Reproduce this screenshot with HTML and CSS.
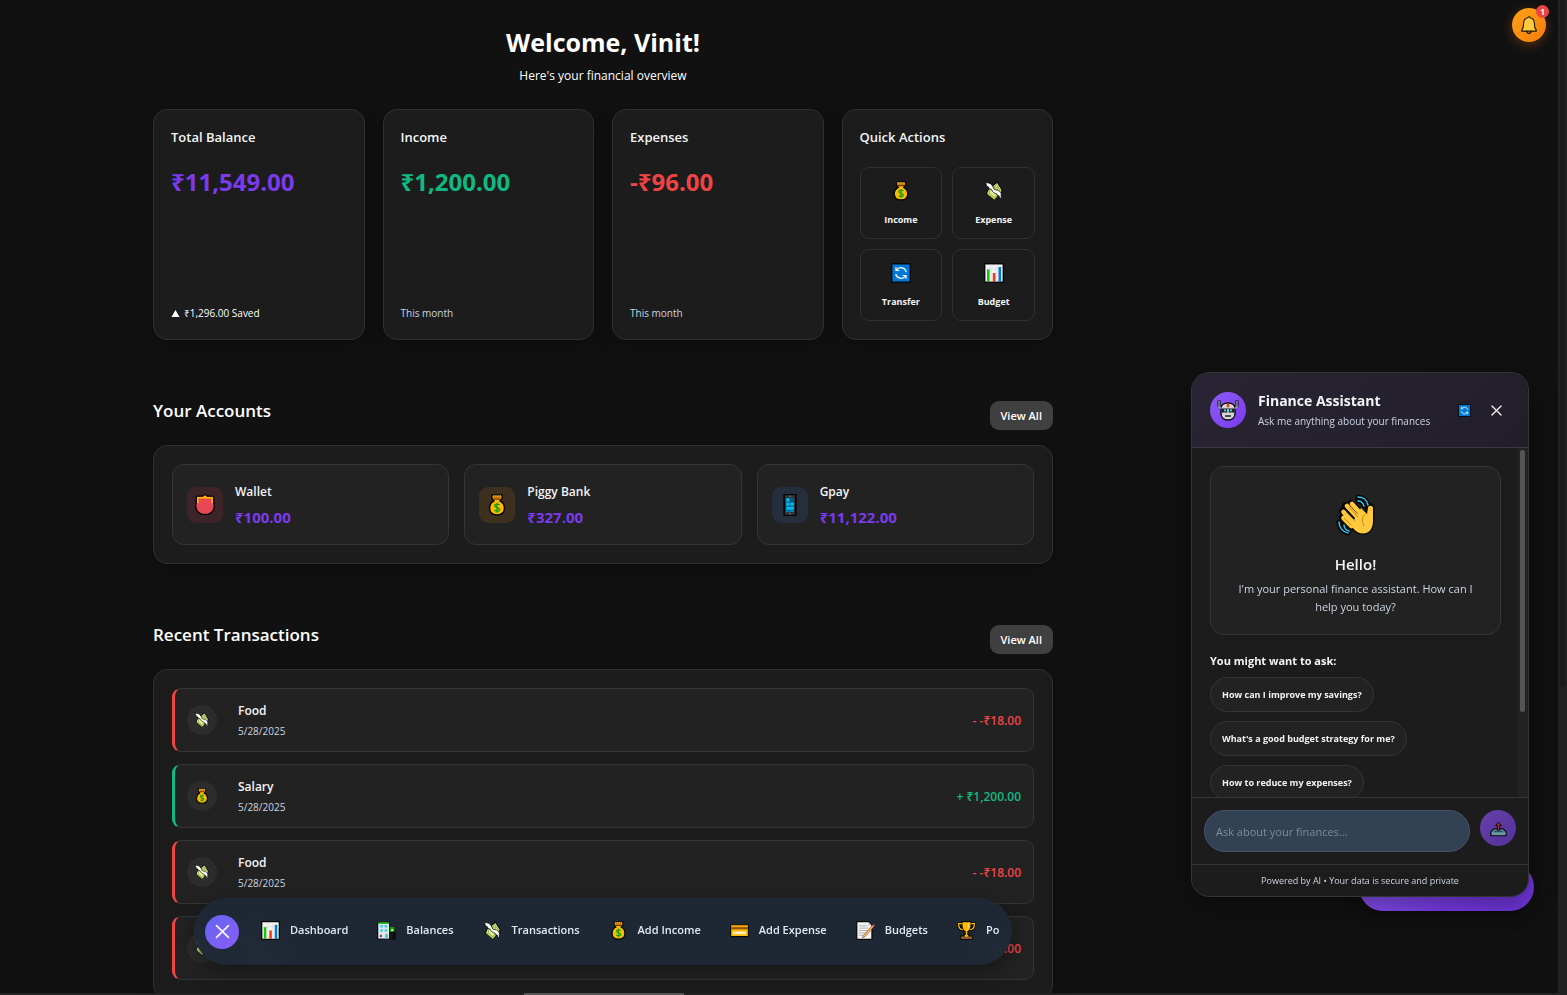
FILE: index.html
```
<!DOCTYPE html>
<html lang="en">
<head>
<meta charset="utf-8">
<meta name="viewport" content="width=device-width, initial-scale=1">
<title>Finance Dashboard</title>
<link rel="stylesheet" href="styles.css">
</head>
<body>
<svg class="sprite" aria-hidden="true">
  <symbol id="bag" viewBox="0 0 20 20">
    <path d="M5.500 1h9v3l-1.700 2.300c2.700 1.500 4 3.700 4 6.500 0 4-2.800 6.200-6.800 6.200s-6.800-2.200-6.800-6.200c0-2.800 1.300-5 4-6.500L5.500 4z" fill="#ffb900" stroke="#080808" stroke-width="1.400"/>
    <path d="M6 1.700h8v2.300H6z" fill="#d67900"/><path d="M7 4h6v1.300H7z" fill="#6d4108"/><path d="M7 1v1.500M9 1v1.500M11 1v1.500M13 1v1.500" stroke="#f7d47a" stroke-width=".7"/>
    <path d="M12.300 10c-.6-1-4.400-1.300-4.400.7 0 2 4.500 1.300 4.500 3.400 0 1.900-3.800 1.900-4.700.6M10 8v9" fill="none" stroke="#13a10e" stroke-width="1.300"/>
  </symbol>
  <symbol id="cash" viewBox="0 0 20 20">
    <path d="m4 8 9-7.500 5.800 8.800L10.500 19.500 2 12.500z" fill="#080808"/>
    <path d="m5 8.500 8-6.500 4.500 7.300-7.200 8.700L3.300 12z" fill="#e3f29a"/>
    <path d="m6 9 6.500-5.500 3.700 6-6 7-5-4.500z" fill="none" stroke="#6f9426" stroke-width=".8"/>
    <circle cx="11.500" cy="8" r="2" fill="#cfe46d" stroke="#658922" stroke-width=".7"/>
    <path d="m3.500 12.500 6.800 5.500 6.700-8" stroke="#b3d13e" stroke-width="1.200" fill="none"/>
    <path d="M1.500 1.700c3.700-.2 6.200 1 7.300 3.800l1.700 3.200c4 .2 6.700 2 6.700 4.500v4.600l-1.700-1-.5-2-1.500-.3-.7-1.600c-2.300-.4-4.500-2-5.300-4.400L5.300 7.800 4.500 6l-1.700-.7z" fill="#fff" stroke="#080808" stroke-width=".8"/>
  </symbol>
  <symbol id="sync" viewBox="0 0 20 20">
    <path d="M.7.7h18.600v18.600H.7z" fill="#0078d4" stroke="#080808" stroke-width="1.400"/>
    <path d="M15.300 9A5.500 5.500 0 0 0 5.500 7M4.700 11A5.500 5.500 0 0 0 14.500 13M5 4.200V7.500h3.300M15 15.800v-3.300h-3.300" fill="none" stroke="#fff" stroke-width="1.200"/>
  </symbol>
  <symbol id="chart" viewBox="0 0 20 20">
    <path d="M.7.7h18.600v18.600H.7z" fill="#f2f2f2" stroke="#080808" stroke-width="1.400"/>
    <path d="M7 1.500v17M12.500 1.500v17M1.500 6h17" stroke="#ddd" stroke-width=".7"/>
    <path d="M3 6.500h2.600v12.200H3z" fill="#16c60c"/><path d="M8.800 10h2.600v8.700H8.800z" fill="#f03a17"/><path d="M14.500 4h2.600v14.700h-2.600z" fill="#0078d7"/>
  </symbol>
  <symbol id="purse" viewBox="0 0 20 20">
    <path d="M10 .8c1.600 0 1.700.8 2.200 1.100h4.200c1 0 1.600.6 1.600 1.600v4.200c1.800 5.700-1.600 10.900-8 10.900S.2 13.400 2 7.700V3.500c0-1 .6-1.600 1.600-1.600h4.200C8.300 1.600 8.400.8 10 .8z" fill="#e74856" stroke="#080808" stroke-width="1.300"/>
    <path d="M3.500 8.500V3.400h13v5.100M9 2.400h2" fill="none" stroke="#ffb900" stroke-width="1.400"/>
  </symbol>
  <symbol id="phone" viewBox="0 0 20 20">
    <path d="M4.700.5h10.600v19H4.700z" fill="#353535" stroke="#050505" stroke-width="1.400"/><path d="M6.300 3.500h7.400v13H6.300z" fill="#00577e"/>
    <path d="M6.600 3.800h2.900v3H6.600zM6.600 7.700h2.900v3H6.600zM10.400 7.700h3v3h-3zM6.600 11.600h6.800v2.800H6.600z" fill="#00bcf2"/><path d="M6.600 15.600h2M10 15.600h3.400" stroke="#00bcf2" stroke-width=".8"/><path d="M9 2h2M9 18h2" stroke="#999" stroke-width=".6"/>
  </symbol>
  <symbol id="building" viewBox="0 0 20 20">
    <path d="M.3.8h13.400v5.400h6v13.300H.3z" fill="#080808"/><path d="M1.300 2.500h11.400v16H1.300z" fill="#e6e6e6"/><path d="M1.300 1.300h11.400v1.600H1.300zM13.500 6.700h5V8h-5z" fill="#16c60c"/>
    <path d="M13.500 7.500h5v4h-5z" fill="#13a10e"/><path d="M15 8.500h2v2h-2z" fill="#c5f7bd"/>
    <path d="M3.500 4.300h2.600v2.600H3.500zM8 4.300h2.600v2.600H8zM3.500 8.700h2.600v2.600H3.500zM8 8.700h2.600v2.600H8z" fill="#38c9ef"/><path d="M8.500 13.500h3v5h-3z" fill="#4fc6df"/><path d="M3 14.500h2.300v2.500H3z" fill="#5a558b"/><path d="M13.500 12.500h4v6h-4z" fill="#171717"/>
  </symbol>
  <symbol id="card" viewBox="0 0 20 20">
    <rect x=".6" y="4" width="18.800" height="12.500" rx="1" fill="#ffb900" stroke="#080808" stroke-width="1.200"/><path d="M1.200 6.500h17.600v2.300H1.200z" fill="#8e4f08"/><path d="M1.200 4.700h17.600v1H1.200z" fill="#e58b18"/><path d="M3 11h14v3H3z" fill="#ffe09a"/><path d="M3.500 13 9 12l8 1" stroke="#fff" fill="none"/>
  </symbol>
  <symbol id="memo" viewBox="0 0 20 20">
    <path d="M.8.7h12.500l3.500 3.500v15.100H.8z" fill="#f4f4f4" stroke="#080808" stroke-width="1.300"/><path d="M13 1v3.500h3.500" fill="#bbb"/>
    <path d="M3 5h9M3 7.500h10M3 10h10M3 12.500h8M3 15h6" stroke="#a9a9a9" stroke-width=".9"/><path d="m7.500 15.500 10-11.300 1.600 1.300L9.200 16.800l-2.500.9z" fill="#ffb45c" stroke="#5b3618" stroke-width=".5"/><path d="m17 4.800 1.200-1.500 1.700 1.400-1.300 1.500z" fill="#e74856"/>
  </symbol>
  <symbol id="trophy" viewBox="0 0 20 20">
    <path d="M5 2.800H1.700c0 4.500 2 6.700 5.300 6.700M15 2.800h3.300c0 4.500-2 6.700-5.300 6.700" fill="none" stroke="#080808" stroke-width="3.200"/>
    <path d="M5 .7h10c.3 6-.7 9-3.500 10.500V14h1v1.800H16v3.500H4v-3.500h3.500V14h1v-2.800C5.700 9.700 4.700 6.700 5 .7z" fill="#ffb900" stroke="#080808" stroke-width="1.300"/>
    <path d="M5 2.800H1.700c0 4.500 2 6.200 4.500 6.200M15 2.800h3.300c0 4.500-2 6.200-4.500 6.200" fill="none" stroke="#ffb900" stroke-width="1.300"/><path d="M12 2c.5 5-.5 7-2 8" fill="none" stroke="#ffda6b"/><path d="M4.700 16.500h10.600v2.300H4.700z" fill="#8e562e"/>
  </symbol>
  <symbol id="bell" viewBox="0 0 20 20">
    <circle cx="10" cy="17" r="2.200" fill="#ffc83d" stroke="#17130a" stroke-width="1.400"/><path d="M8.700 2c0-1.600 2.600-1.600 2.600 0 3.500.6 4.700 3 4.700 6.500 0 3.500.5 5.200 2 7v1.300H2v-1.300c1.500-1.800 2-3.500 2-7C4 5 5.200 2.600 8.700 2z" fill="#ffc83d" stroke="#17130a" stroke-width="1.200"/>
  </symbol>
  <symbol id="robot" viewBox="0 0 22 22">
    <path d="M2 1.500v6M20 1.500v6" stroke="#080808" stroke-width="3"/>
    <path d="M4 9c0-3 3-5 7-5s7 2 7 5v5.500c0 4-3 6.500-7 6.500s-7-2.500-7-6.500z" fill="#d3d5d6" stroke="#080808" stroke-width="1.400"/>
    <path d="M2 2v5.500l2.500 2.300M20 2v5.500l-2.500 2.300" fill="none" stroke="#9a9d9f" stroke-width="1.400"/>
    <path d="M9.800 4.500h2.400v3.700H9.800z" fill="#f03a17"/><path d="M4.700 9.500h12.600v4H4.700z" fill="#161616"/><path d="M6.800 10.300h2.400v2.200H6.800zM12.800 10.300h2.400v2.200h-2.400z" fill="#31c4ed"/><path d="M10 10h2v4h-2z" fill="#aeb1b2"/><path d="M8 16.300h6v1.500H8z" fill="#222"/>
  </symbol>
  <symbol id="wave" viewBox="0 0 40 42">
    <g fill="none" stroke-linecap="round" stroke-linejoin="round">
      <g stroke="#080808">
        <path d="M22 7c3 0 5 2 6 5M22 3c5 0 9 3 10 8M8 31c0 3 2 5 5 6M3 28c0 6 4 10 9 11" stroke-width="5"/>
        <path d="m15 10 9 9M10 12l12 13M7 17l11 12M7 23l9 9" stroke-width="8"/>
        <path d="M16 32c7 9 20 9 20-5V14c0-3-4-3-4 0l-1 6L17 14l-6 12z" stroke-width="5"/>
      </g>
      <path d="M22 7c3 0 5 2 6 5M22 3c5 0 9 3 10 8M8 31c0 3 2 5 5 6M3 28c0 6 4 10 9 11" stroke="#31c4ed" stroke-width="1.500"/>
      <path d="m16 10 9 10M11 12l12 13M7.500 18l11 12M7.500 24l8 8" stroke="#ffc83d" stroke-width="4.600"/>
    </g>
    <path d="m15 31 10-17 6 6 1-6c0-3 5-3 5 0v13c0 15-14 16-21 6z" fill="#ffc83d"/>
    <path d="m13 13 9 10M10 18l9 9M8 24l7 7M32 19c-6 2-7 7-4 13" fill="none" stroke="#c58a16" stroke-width="1"/>
  </symbol>
  <symbol id="outbox" viewBox="0 0 20 20">
    <path d="M4.500 10.500h11l3.500 3.500v4.500H1V14z" fill="#6f98a5" stroke="#080808" stroke-width="1.400"/><path d="M5 12.500h10l1.500 1.800h-13z" fill="#22566b"/><path d="m10 2.500 3.500 4h-2V12h-3V6.500h-2z" fill="#a12a35" stroke="#080808" stroke-width="1.100"/>
  </symbol>
  <symbol id="close" viewBox="0 0 20 20"><path d="m3 3 14 14M17 3 3 17" fill="none" stroke="currentColor" stroke-width="2" stroke-linecap="round"/></symbol>
</svg>

<div class="layout">
<main class="dashboard">
  <header class="welcome">
    <h1>Welcome, Vinit!</h1>
    <p>Here's your financial overview</p>
  </header>

  <section class="summary" aria-label="Summary">
    <article class="panel stat">
      <h2>Total Balance</h2>
      <p class="amount violet">₹11,549.00</p>
      <p class="note saved"><svg class="triangle" viewBox="0 0 10 10" aria-hidden="true"><path d="m5 1 4.500 8h-9z" fill="#fff"/></svg>₹1,296.00 Saved</p>
    </article>
    <article class="panel stat">
      <h2>Income</h2>
      <p class="amount green">₹1,200.00</p>
      <p class="note">This month</p>
    </article>
    <article class="panel stat">
      <h2>Expenses</h2>
      <p class="amount red">-₹96.00</p>
      <p class="note">This month</p>
    </article>
    <article class="panel stat">
      <h2>Quick Actions</h2>
      <div class="actions">
        <button class="action" type="button"><svg><use href="#bag"/></svg>Income</button>
        <button class="action" type="button"><svg><use href="#cash"/></svg>Expense</button>
        <button class="action" type="button"><svg><use href="#sync"/></svg>Transfer</button>
        <button class="action" type="button"><svg><use href="#chart"/></svg>Budget</button>
      </div>
    </article>
  </section>

  <section class="section">
    <div class="section-head"><h2>Your Accounts</h2><button class="view-all" type="button">View All</button></div>
    <div class="panel accounts">
      <article class="account"><span class="account-icon tint-red"><svg><use href="#purse"/></svg></span><div><h3>Wallet</h3><p>₹100.00</p></div></article>
      <article class="account"><span class="account-icon tint-amber"><svg><use href="#bag"/></svg></span><div><h3>Piggy Bank</h3><p>₹327.00</p></div></article>
      <article class="account"><span class="account-icon tint-blue"><svg><use href="#phone"/></svg></span><div><h3>Gpay</h3><p>₹11,122.00</p></div></article>
    </div>
  </section>

  <section class="section">
    <div class="section-head"><h2>Recent Transactions</h2><button class="view-all" type="button">View All</button></div>
    <ul class="panel transactions">
      <li class="transaction expense"><span class="round-icon"><svg><use href="#cash"/></svg></span><div><h3>Food</h3><time datetime="2025-05-28">5/28/2025</time></div><strong>- -₹18.00</strong></li>
      <li class="transaction income"><span class="round-icon"><svg><use href="#bag"/></svg></span><div><h3>Salary</h3><time datetime="2025-05-28">5/28/2025</time></div><strong>+ ₹1,200.00</strong></li>
      <li class="transaction expense"><span class="round-icon"><svg><use href="#cash"/></svg></span><div><h3>Food</h3><time datetime="2025-05-28">5/28/2025</time></div><strong>- -₹18.00</strong></li>
      <li class="transaction expense"><span class="round-icon"><svg><use href="#cash"/></svg></span><div><h3>Food</h3><time datetime="2025-05-28">5/28/2025</time></div><strong>- -₹18.00</strong></li>
    </ul>
  </section>
</main>
</div>

<nav class="dock" aria-label="Main">
  <button class="dock-close" type="button" aria-label="Close menu"><svg><use href="#close"/></svg></button>
  <div class="dock-links">
    <a href="#"><svg><use href="#chart"/></svg>Dashboard</a>
    <a href="#"><svg><use href="#building"/></svg>Balances</a>
    <a href="#"><svg><use href="#cash"/></svg>Transactions</a>
    <a href="#"><svg><use href="#bag"/></svg>Add Income</a>
    <a href="#"><svg><use href="#card"/></svg>Add Expense</a>
    <a href="#"><svg><use href="#memo"/></svg>Budgets</a>
    <a href="#"><svg><use href="#trophy"/></svg>Pots</a>
  </div>
</nav>

<button class="bell" type="button" aria-label="Notifications"><svg><use href="#bell"/></svg><span class="badge">1</span></button>
<button class="assistant-toggle" type="button" aria-label="Toggle assistant"></button>

<aside class="chat" aria-label="Finance Assistant">
  <header class="chat-head">
    <span class="avatar"><svg><use href="#robot"/></svg></span>
    <div class="chat-title"><h2>Finance Assistant</h2><p>Ask me anything about your finances</p></div>
    <button type="button" class="icon-button" aria-label="Reset chat"><svg><use href="#sync"/></svg></button>
    <button type="button" class="icon-button" aria-label="Close chat"><svg><use href="#close"/></svg></button>
  </header>
  <div class="chat-main">
    <div class="chat-body">
      <div class="hello"><svg><use href="#wave"/></svg><h3>Hello!</h3><p>I'm your personal finance assistant. How can I help you today?</p></div>
      <h4>You might want to ask:</h4>
      <div class="chips">
        <button type="button">How can I improve my savings?</button>
        <button type="button">What's a good budget strategy for me?</button>
        <button type="button">How to reduce my expenses?</button>
      </div>
    </div>
    <div class="chat-track"><div class="chat-thumb"></div></div>
  </div>
  <form class="chat-form">
    <input type="text" aria-label="Ask about your finances" placeholder="Ask about your finances...">
    <button type="button" aria-label="Send"><svg><use href="#outbox"/></svg></button>
  </form>
  <footer class="chat-foot">Powered by AI • Your data is secure and private</footer>
</aside>
<div class="page-track"><div class="page-thumb"></div></div>
<div class="bottom-track"><div class="bottom-thumb"></div></div>
</body>
</html>
```
FILE: styles.css
```
* { box-sizing: border-box; }
body {
  margin: 0;
  height: 100vh;
  overflow: hidden;
  background: #111;
  color: #f3f4f6;
  font-family: "Open Sans", "Noto Sans", sans-serif;
  font-size: 12px;
}
h1, h2, h3, h4, p, ul { margin: 0; padding: 0; }
button, input { font: inherit; color: inherit; }
button { cursor: pointer; padding: 0; border: 0; }
svg { display: block; flex: none; }
.sprite { position: absolute; width: 0; height: 0; }

.layout { padding-right: 361px; }
.dashboard { max-width: 936px; margin: 0 auto; padding: 24px 18px; }
.welcome { text-align: center; color: #fff; }
.welcome h1 { font-size: 25px; line-height: 36px; font-weight: 700; }
.welcome p { margin-top: 6px; font-size: 12px; line-height: 19px; }

.panel {
  background: #1c1c1c;
  border: 1px solid #303030;
  border-radius: 14px;
  box-shadow: 0 4px 18px rgba(0, 0, 0, .25);
}
.summary { display: grid; grid-template-columns: repeat(4, 1fr); gap: 18px; margin-top: 24px; }
.stat { display: flex; flex-direction: column; padding: 18px 17px; }
.stat h2 { font-size: 13px; line-height: 18px; font-weight: 600; }
.amount { margin-top: 18px; font-size: 24px; line-height: 36px; font-weight: 700; }
.violet { color: #7c3aed; }
.green { color: #10b981; }
.red { color: #ef4444; }
.note { display: flex; align-items: center; gap: 4px; margin-top: auto; font-size: 10px; line-height: 16px; color: #cbd5e1; }
.saved { color: #fff; }
.triangle { width: 9px; height: 9px; }
.actions { display: grid; grid-template-columns: 1fr 1fr; gap: 10px; margin-top: 21px; }
.action {
  display: flex; flex-direction: column; align-items: center; justify-content: center; gap: 12px;
  height: 72px; padding-top: 1px; border: 1px solid #303030; border-radius: 9px; background: #1c1c1c;
  font-size: 9px; line-height: 14px; font-weight: 700;
}
.action svg { width: 20px; height: 20px; }

.section { margin-top: 61px; }
.section-head { display: flex; align-items: flex-start; justify-content: space-between; margin-bottom: 15px; }
.section-head h2 { font-size: 17px; line-height: 20px; font-weight: 600; color: #fff; }
.view-all { height: 29px; padding: 0 11px; border-radius: 9px; background: #404040; color: #fff; font-size: 11px; font-weight: 600; }
.accounts { display: grid; grid-template-columns: repeat(3, 1fr); gap: 15px; padding: 18px; }
.account { display: flex; align-items: center; gap: 12px; padding: 14px; border: 1px solid #353535; border-radius: 12px; background: #222; }
.account h3 { font-size: 12px; line-height: 25px; font-weight: 600; }
.account p { font-size: 15px; line-height: 26px; font-weight: 700; color: #7c3aed; }
.account-icon { display: grid; place-items: center; width: 36px; height: 36px; border-radius: 9px; }
.account-icon svg { width: 22px; height: 22px; }
.tint-red { background: #3d2428; }
.tint-amber { background: #3d301e; }
.tint-blue { background: #252e3d; }

.transactions { display: flex; flex-direction: column; gap: 12px; padding: 18px; list-style: none; }
.transaction { display: flex; align-items: center; height: 64px; padding: 0 12px; border: 1px solid #353535; border-left: 3px solid; border-radius: 9px; background: #222; }
.transaction div { margin-left: 21px; flex: 1; }
.transaction h3 { font-size: 12px; line-height: 22px; font-weight: 600; }
.transaction time { display: block; font-size: 10px; line-height: 19px; color: #cbd5e1; }
.transaction strong { font-size: 12px; font-weight: 600; }
.transaction.expense { border-left-color: #ef4444; }
.transaction.income { border-left-color: #10b981; }
.expense strong { color: #ef4444; }
.income strong { color: #10b981; }
.round-icon { display: grid; place-items: center; width: 30px; height: 30px; border-radius: 50%; background: #2c2c2c; }
.round-icon svg { width: 16px; height: 16px; }

.dock {
  position: fixed; left: calc((100% - 361px) / 2); bottom: 30px; transform: translateX(-50%);
  display: flex; align-items: center; width: 818px; height: 67px; padding: 0 13px 0 11px;
  border-radius: 34px; background: rgba(31, 41, 55, .95); backdrop-filter: blur(10px); box-shadow: 0 6px 20px rgba(0, 0, 0, .35);
}
.dock-close { display: grid; place-items: center; flex: none; width: 34px; height: 34px; border-radius: 50%; background: linear-gradient(135deg, #6366f1, #8b5cf6); }
.dock-close svg { width: 17px; height: 17px; }
.dock-links { display: flex; gap: 29px; margin-left: 22px; padding-bottom: 3px; flex: 1; min-width: 0; overflow: hidden; }
.dock-links a { display: flex; align-items: center; gap: 10px; color: #e2e8f0; font-size: 11px; line-height: 20px; font-weight: 600; text-decoration: none; white-space: nowrap; }
.dock-links svg { width: 19px; height: 19px; }

.bell {
  position: fixed; top: 8px; right: 21px; display: grid; place-items: center; width: 34px; height: 34px;
  border-radius: 50%; background: linear-gradient(135deg, #ffa31a, #f57c0a); box-shadow: 0 3px 12px rgba(249, 115, 22, .3);
}
.bell svg { width: 18px; height: 18px; }
.badge { position: absolute; top: -3px; right: -3px; width: 13px; height: 13px; border-radius: 50%; background: #ef4444; color: #fff; font-size: 9px; line-height: 13px; font-weight: 700; }
.assistant-toggle { position: fixed; right: 33px; bottom: 84px; width: 175px; height: 48px; border-radius: 24px; background: linear-gradient(135deg, #8b5cf6, #7c3aed 60%, #6d35d9); box-shadow: 0 4px 16px rgba(0, 0, 0, .3); }

.chat {
  position: fixed; right: 38px; bottom: 98px; display: flex; flex-direction: column; width: 338px; height: 525px;
  overflow: hidden; border: 1px solid #353535; border-radius: 18px; background: #1c1c1c; box-shadow: 0 8px 28px rgba(0, 0, 0, .4);
}
.chat-head { display: flex; align-items: center; height: 75px; padding: 0 16px 0 18px; border-bottom: 1px solid #3b3746; background: linear-gradient(135deg, #292433, #221e29); }
.avatar { display: grid; place-items: center; width: 36px; height: 36px; border-radius: 50%; background: linear-gradient(135deg, #8b5cf6, #7c3aed); }
.avatar svg { width: 22px; height: 22px; }
.chat-title { flex: 1; margin-left: 12px; white-space: nowrap; }
.chat-title h2 { font-size: 14px; line-height: 22px; font-weight: 700; }
.chat-title p { font-size: 10px; line-height: 18px; color: #cbd5e1; }
.icon-button { display: grid; place-items: center; width: 32px; height: 28px; background: none; }
.icon-button svg { width: 13px; height: 13px; }
.chat-main { display: flex; flex: 1; min-height: 0; }
.chat-body { flex: 1; padding: 18px 17px 0 18px; overflow: hidden; }
.chat-track { width: 10px; padding: 2px 3px 2px 2px; background: #222; }
.chat-thumb { height: 76%; border-radius: 3px; background: #555; }
.hello { display: flex; flex-direction: column; align-items: center; padding: 26px 18px 18px; border: 1px solid #353535; border-radius: 14px; background: #222; text-align: center; }
.hello svg { width: 40px; height: 44px; }
.hello h3 { margin-top: 15px; font-size: 15px; line-height: 24px; font-weight: 600; }
.hello p { margin-top: 4px; font-size: 11px; line-height: 18px; color: #cbd5e1; }
.chat-body h4 { margin-top: 17px; font-size: 11px; line-height: 18px; font-weight: 700; }
.chips { display: flex; flex-direction: column; align-items: flex-start; gap: 9px; margin-top: 7px; }
.chips button { flex: none; height: 35px; padding: 0 11px; border: 1px solid #353535; border-radius: 18px; background: #222; font-size: 9px; font-weight: 700; }
.chat-form { display: flex; align-items: flex-start; gap: 10px; padding: 12px 12px; border-top: 1px solid #353535; }
.chat-form input { flex: 1; min-width: 0; height: 42px; padding: 0 11px; border: 1px solid #475569; border-radius: 21px; background: #334155; font-size: 11px; }
.chat-form input::placeholder { color: #7e8b9e; }
.chat-form button { display: grid; place-items: center; width: 36px; height: 36px; border-radius: 50%; background: linear-gradient(135deg, #6641a8, #53309b); }
.chat-form button svg { width: 17px; height: 17px; }
.chat-foot { border-top: 1px solid #353535; font-size: 9px; line-height: 31px; text-align: center; color: #cbd5e1; }

.page-track { position: fixed; top: 0; right: 0; bottom: 0; width: 9px; padding: 0 2px; background: #222; }
.page-thumb { height: 69%; border-radius: 0 0 3px 3px; background: #1b1b1b; }
.bottom-track { position: fixed; left: 0; right: 9px; bottom: 0; height: 2px; background: #222; }
.bottom-thumb { width: 160px; height: 2px; margin-left: 524px; background: #555; }
```
